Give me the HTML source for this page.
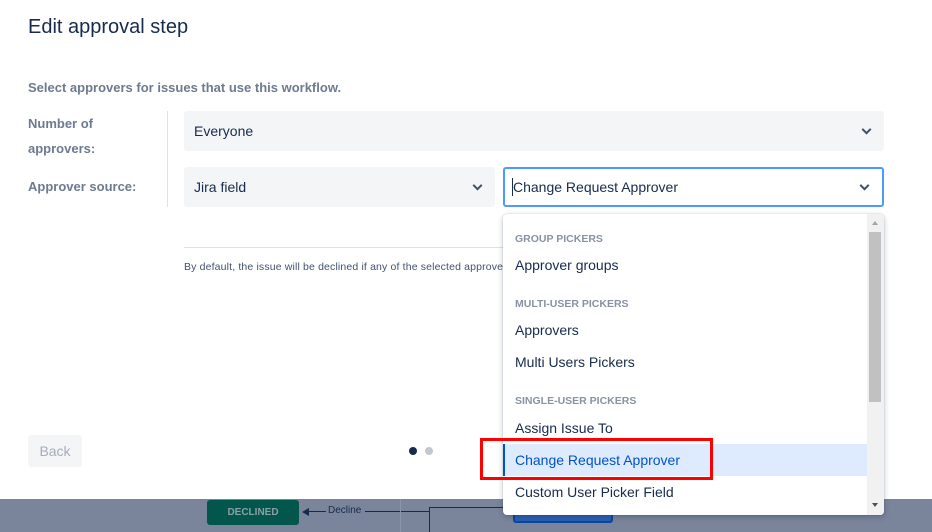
<!DOCTYPE html>
<html><head><style>
*{box-sizing:border-box;margin:0;padding:0}
body{width:932px;height:532px;overflow:hidden;position:relative;background:#fff;font-family:"Liberation Sans",sans-serif;color:#172b4d}
.a{position:absolute}
.sel{position:absolute;background:#f4f5f7;border-radius:3px;font-size:14px;color:#172b4d;padding-left:10px;display:flex;align-items:center}
.chev{position:absolute;right:14px;top:50%;width:7px;height:7px;border-right:2px solid #42526e;border-bottom:2px solid #42526e;transform:translateY(-70%) rotate(45deg)}
.hd{position:absolute;left:12px;font-size:10.5px;color:#6b778c;font-weight:bold;opacity:.8}
.it{position:absolute;left:0;width:364px;height:32px;font-size:14px;color:#172b4d;padding-left:12px;line-height:32px}
</style></head><body>
<div class="a" style="left:28px;top:16px;font-size:20px;color:#172b4d">Edit approval step</div>
<div class="a" style="left:28px;top:80px;font-size:13px;color:#5e6c84;font-weight:bold;opacity:.9">Select approvers for issues that use this workflow.</div>
<div class="a" style="left:28px;top:111px;font-size:13px;color:#5e6c84;font-weight:bold;line-height:25px;opacity:.9">Number of<br>approvers:</div>
<div class="a" style="left:28px;top:179px;font-size:13px;color:#5e6c84;font-weight:bold;opacity:.9">Approver source:</div>
<div class="a" style="left:167px;top:111px;width:1px;height:96px;background:#dfe1e6"></div>
<div class="sel" style="left:184px;top:111px;width:700px;height:40px">Everyone<span class="chev"></span></div>
<div class="sel" style="left:184px;top:167px;width:311px;height:40px">Jira field<span class="chev"></span></div>
<div class="sel" style="left:503px;top:167px;width:381px;height:40px;background:#fff;border:2px solid #4c9aff;padding-left:8px">Change Request Approver<span class="chev"></span></div>
<div class="a" style="left:512px;top:178px;width:1px;height:18px;background:#172b4d"></div>
<div class="a" style="left:184px;top:247px;width:320px;height:1px;background:#dfe1e6"></div>
<div class="a" style="left:184px;top:261px;font-size:10.5px;letter-spacing:0.15px;color:#42526e;white-space:nowrap">By default, the issue will be declined if any of the selected approve</div>
<div class="a" style="left:28px;top:435px;width:54px;height:32px;background:#f4f5f7;border-radius:3px;color:#a5adba;font-size:14px;text-align:center;line-height:32px">Back</div>
<div class="a" style="left:409px;top:447px;width:8px;height:8px;border-radius:50%;background:#172b4d"></div>
<div class="a" style="left:425px;top:447px;width:8px;height:8px;border-radius:50%;background:#c1c7d0"></div>
<div class="a" style="left:0;top:499px;width:932px;height:33px;background:#7a849a">
 <div class="a" style="left:207px;top:1px;width:92px;height:25px;background:#03564c;border-radius:3px;color:#8a9fa6;font-size:10px;font-weight:bold;text-align:center;line-height:25px">DECLINED</div>
 <div class="a" style="left:302px;top:9px;width:0;height:0;border-top:4px solid transparent;border-bottom:4px solid transparent;border-right:7px solid #172b4d"></div>
 <div class="a" style="left:308px;top:12px;width:18px;height:1px;background:#172b4d"></div>
 <div class="a" style="left:328px;top:6px;font-size:10px;color:#172b4d">Decline</div>
 <div class="a" style="left:365px;top:12px;width:64px;height:1px;background:#172b4d"></div>
 <div class="a" style="left:429px;top:8px;width:1px;height:25px;background:#172b4d"></div>
 <div class="a" style="left:429px;top:8px;width:80px;height:1px;background:#172b4d"></div>
 <div class="a" style="left:400px;top:0;width:1px;height:33px;background:#8b94a8"></div>
 <div class="a" style="left:513px;top:14px;width:100px;height:10px;border:2px solid #0747a6;background:#2d5fb0;border-radius:3px"></div>
</div>
<div class="a" style="left:503px;top:214px;width:381px;height:301px;background:#fff;border-radius:4px;box-shadow:0 2px 6px rgba(9,30,66,.25),0 0 1px rgba(9,30,66,.3);overflow:hidden">
 <div class="hd" style="top:19px">GROUP PICKERS</div>
 <div class="it" style="top:35px">Approver groups</div>
 <div class="hd" style="top:84px">MULTI-USER PICKERS</div>
 <div class="it" style="top:100px">Approvers</div>
 <div class="it" style="top:132px">Multi Users Pickers</div>
 <div class="hd" style="top:181px">SINGLE-USER PICKERS</div>
 <div class="it" style="top:198px">Assign Issue To</div>
 <div class="it" style="top:230px;background:#deebff;color:#0052cc;border-left:2px solid #0052cc;padding-left:10px">Change Request Approver</div>
 <div class="it" style="top:262px">Custom User Picker Field</div>
 <div class="a" style="left:364px;top:0;width:17px;height:301px;background:#f1f1f1"></div>
 <div class="a" style="left:366px;top:18px;width:12px;height:170px;background:#c1c1c1"></div>
 <div class="a" style="left:369px;top:7px;border-left:3px solid transparent;border-right:3px solid transparent;border-bottom:4px solid #a3a3a3"></div>
 <div class="a" style="left:369px;top:289px;border-left:3px solid transparent;border-right:3px solid transparent;border-top:4px solid #505050"></div>
</div>
<div class="a" style="left:480px;top:438px;width:233px;height:42px;border:3px solid #f00"></div>
</body></html>
